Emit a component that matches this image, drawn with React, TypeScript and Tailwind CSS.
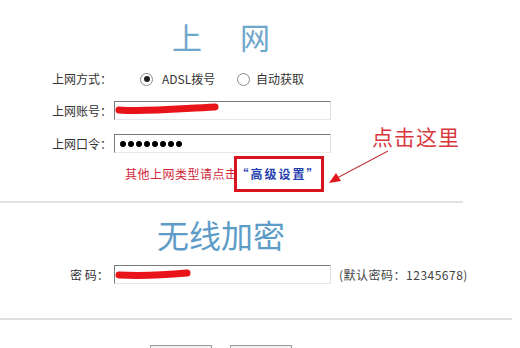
import React from 'react';

const cjk = { fontFamily: '"Noto Sans CJK SC", "Liberation Sans", sans-serif' };

const Scribble: React.FC<{ width: number; d: string }> = ({ width, d }) => (
  <svg className="absolute left-0 top-0" width={width} height={18} viewBox={`0 0 ${width} 18`}>
    <path d={d} stroke="#e8141a" strokeWidth={7} strokeLinecap="round" fill="none" />
  </svg>
);

const Field: React.FC<{ children?: React.ReactNode }> = ({ children }) => (
  <div className="relative w-[217px] h-[19px] border border-t-[#7a7a7a] border-l-[#7a7a7a] border-r-[#e0e0e0] border-b-[#e8e8e8] bg-white">
    {children}
  </div>
);

const Radio: React.FC<{ checked?: boolean }> = ({ checked }) => (
  <span className="w-[13px] h-[13px] rounded-full border border-[#8a8a8a] bg-white flex items-center justify-center">
    {checked && <span className="w-[6px] h-[6px] rounded-full bg-[#222]" />}
  </span>
);

export default function App() {
  const dots = [0, 1, 2, 3, 4, 5, 6, 7];
  return (
    <div className="relative w-[520px] h-[348px] overflow-hidden bg-white text-[12px] text-[#333]" style={cjk}>
      <div className="w-[442px] pt-[18px] flex justify-center gap-[38px] text-[30px] leading-[36px] text-[#6fa7cb]">
        <span>上</span>
        <span>网</span>
      </div>

      <div className="mt-[17px] flex items-center h-[16px] pl-[52px]">
        <span className="w-[88px]">上网方式：</span>
        <Radio checked />
        <span className="ml-[9px] w-[75px]">ADSL拨号</span>
        <Radio />
        <span className="ml-[6px]">自动获取</span>
      </div>

      <div className="mt-[14px] flex items-center pl-[52px]">
        <span className="w-[62px]">上网账号：</span>
        <Field>
          <Scribble width={110} d="M4 8 C 30 10, 60 7, 100 5" />
        </Field>
      </div>

      <div className="mt-[14px] flex items-center pl-[52px]">
        <span className="w-[62px]">上网口令：</span>
        <Field>
          <div className="absolute left-[5px] top-0 h-full flex items-center gap-[2px]">
            {dots.map((i) => (
              <span key={i} className="w-[6px] h-[6px] rounded-full bg-black" />
            ))}
          </div>
        </Field>
      </div>

      <div className="mt-[3px] flex items-center pl-[125px] h-[36px]">
        <span className="text-[#d0283a] tracking-[0.5px]">其他上网类型请点击</span>
        <span className="ml-[-4px] h-[36px] w-[90px] border-[3px] border-[#d8151f] flex items-center justify-center font-bold text-[#1f3fb0] tracking-[2px]">
          “高级设置”
        </span>
      </div>

      <div className="mt-[9px] w-[463px] h-[2px] bg-[#e2e2e2]" />

      <div className="w-[442px] mt-[12px] flex justify-center text-[32px] leading-[38px] text-[#5e9cc8]">
        无线加密
      </div>

      <div className="mt-[12px] flex items-center pl-[70px]">
        <span className="w-[44px]">密 码：</span>
        <Field>
          <Scribble width={80} d="M4 9 C 25 10, 50 9, 72 7" />
        </Field>
        <span className="ml-[8px] text-[#444] tracking-[0.5px]">(默认密码：12345678)</span>
      </div>

      <div className="mt-[34px] w-[512px] h-[2px] bg-[#e0e0e0]" />

      <div className="mt-[25px] flex gap-[18px] pl-[150px]">
        <div className="w-[62px] h-[20px] border border-[#9a9a9a] bg-[#f2f2f2]" />
        <div className="w-[62px] h-[20px] border border-[#9a9a9a] bg-[#f2f2f2]" />
      </div>

      <div className="absolute left-[372px] top-[122px] text-[21px] leading-[28px] tracking-[1px] text-[#d8393f]">点击这里</div>
      <svg className="absolute left-[325px] top-[148px]" width={70} height={40} viewBox="0 0 70 40">
        <line x1={63} y1={3} x2={12} y2={30} stroke="#c43a42" strokeWidth={1.2} />
        <polygon points="4,35 11,25 16,33" fill="#e0141c" />
      </svg>
    </div>
  );
}
